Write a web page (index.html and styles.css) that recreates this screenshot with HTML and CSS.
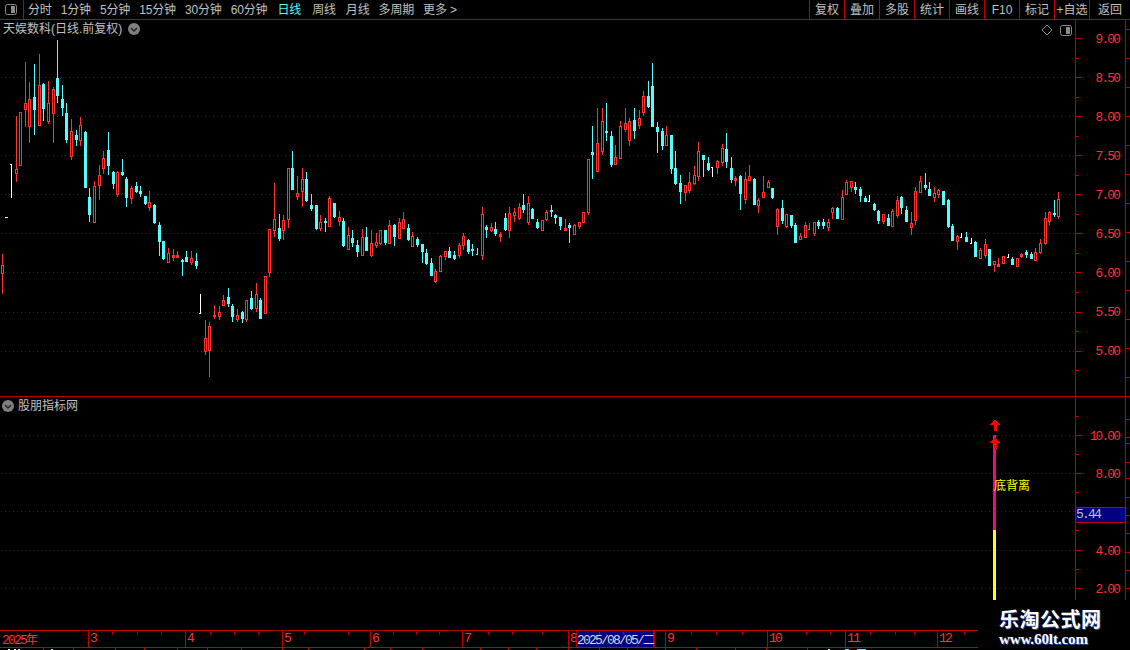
FILE: index.html
```html
<!DOCTYPE html>
<html lang="zh-CN">
<head>
<meta charset="utf-8">
<title>天娱数科 日线</title>
<link rel="stylesheet" href="styles.css">
</head>
<body>
<div class="app">
  <header class="toolbar">
    <div class="layout-cell">
      <svg class="pane-icon" viewBox="0 0 12 11" width="12" height="11"><rect x="0.5" y="0.5" width="11" height="10" rx="2" class="pane-frame"/><rect x="6" y="2" width="4" height="7" class="pane-fill"/></svg>
    </div>
    <nav class="periods">
      <span>分时</span><span>1分钟</span><span>5分钟</span><span>15分钟</span><span>30分钟</span><span>60分钟</span>
      <span class="active">日线</span><span class="shift-2">周线</span><span class="shift-1">月线</span><span>多周期</span><span>更多 &gt;</span>
    </nav>
    <div class="actions">
      <span>复权</span><span>叠加</span><span>多股</span><span>统计</span><span>画线</span><span>F10</span><span>标记</span><span>+自选</span><span class="last">返回</span>
    </div>
  </header>

  <section class="panel panel-main">
    <div class="plot">
      <svg class="canvas" id="candles" viewBox="0 20 1075 376" preserveAspectRatio="none"></svg>
      <div class="legend legend-main">
        <span>天娱数科(日线.前复权)</span>
        <svg class="chevron" viewBox="0 0 12 12" width="12" height="12"><circle cx="6" cy="6" r="6" class="chevron-disc"/><path d="M3 5 L6 8 L9 5" class="chevron-mark"/></svg>
      </div>
      <div class="pane-tools">
        <svg viewBox="0 0 12 12" width="12" height="12"><path d="M6 1 L11 6 L6 11 L1 6 Z" class="diamond"/></svg>
        <svg viewBox="0 0 12 11" width="12" height="11"><rect x="0.5" y="0.5" width="11" height="10" rx="2" class="pane-frame"/><rect x="6" y="2" width="4" height="7" class="pane-fill"/></svg>
      </div>
    </div>
    <div class="axis">
      <svg class="canvas" id="axis-main" viewBox="0 20 50 376" preserveAspectRatio="none">
        <text x="44" y="43">9.00</text><text x="44" y="82">8.50</text><text x="44" y="121">8.00</text>
        <text x="44" y="160">7.50</text><text x="44" y="199">7.00</text><text x="44" y="238">6.50</text>
        <text x="44" y="277">6.00</text><text x="44" y="316">5.50</text><text x="44" y="355">5.00</text>
      </svg>
    </div>
    <div class="rail"><svg class="canvas" id="rail-main" viewBox="0 20 4 376" preserveAspectRatio="none"></svg></div>
  </section>

  <section class="panel panel-sub">
    <div class="plot">
      <svg class="canvas" id="indicator" viewBox="0 397 1075 233" preserveAspectRatio="none">
        <rect x="993" y="435" width="3" height="95" class="bar-pink"/>
        <rect x="993" y="530" width="3" height="70" class="bar-yellow"/>
        <path d="M995 419 L1000.500 425 L996.500 425 L996.500 431 L993.500 431 L993.500 425 L989.500 425 Z" class="arrow"/>
        <path d="M995 437 L1000.500 443 L996.500 443 L996.500 449 L993.500 449 L993.500 443 L989.500 443 Z" class="arrow"/>
      </svg>
      <div class="legend legend-sub">
        <svg class="chevron" viewBox="0 0 12 12" width="12" height="12"><circle cx="6" cy="6" r="6" class="chevron-disc"/><path d="M3 5 L6 8 L9 5" class="chevron-mark"/></svg>
        <span>股朋指标网</span>
      </div>
      <span class="signal">底背离</span>
    </div>
    <div class="axis">
      <svg class="canvas" id="axis-sub" viewBox="0 397 50 233" preserveAspectRatio="none">
        <text x="44" y="440">10.00</text><text x="44" y="478">8.00</text>
        <text x="44" y="555">4.00</text><text x="44" y="593">2.00</text>
      </svg>
      <div class="price-tag">5.44</div>
    </div>
    <div class="rail"><svg class="canvas" id="rail-sub" viewBox="0 397 4 233" preserveAspectRatio="none"></svg></div>
  </section>

  <footer class="dates">
    <span>2025<b class="cjk">年</b></span><span>3</span><span>4</span><span>5</span><span>6</span><span>7</span><span>8</span>
    <span class="date-current">2025/08/05/<b class="cjk">二</b></span><span></span>
    <span>9</span><span>10</span><span>11</span><span>12</span>
    <svg class="canvas" id="date-ticks" viewBox="0 630 1130 20" preserveAspectRatio="none"></svg>
  </footer>

  <aside class="watermark">
    <div class="wm-title">乐淘公式网</div>
    <div class="wm-url">www.60lt.com</div>
  </aside>
</div>
<script src="app.js"></script>
</body>
</html>
```

FILE: styles.css
```css
* { box-sizing: border-box; }
html, body { margin: 0; padding: 0; background: #000; }
body { width: 1130px; height: 650px; overflow: hidden; font: 12px/1 "Liberation Sans", "Noto Sans CJK SC", sans-serif; color: #c0c0c0; }
.app { position: relative; width: 1130px; height: 650px; display: flex; flex-direction: column; background: #000; }

.toolbar { height: 20px; display: flex; border-bottom: 1px solid #c00000; line-height: 21px; flex: none; }
.layout-cell { width: 24px; border-right: 1px solid #c00000; display: flex; align-items: center; justify-content: center; padding-right: 1px; }
.pane-frame { fill: none; stroke: #8c8c8c; }
.pane-fill { fill: #8c8c8c; }
.periods { display: flex; gap: 9px; padding-left: 4px; white-space: nowrap; letter-spacing: -0.150px; }
.periods .active { color: #54fcfc; margin-left: 1px; }
.periods .shift-2 { margin-left: 2px; }
.periods .shift-1 { margin-left: 1px; }
.actions { margin-left: auto; display: flex; }
.actions span { width: 35px; text-align: center; border-left: 1px solid #c00000; white-space: nowrap; }
.actions .last { width: 41px; }

.panel { display: flex; position: relative; flex: none; border-bottom: 1px solid #c00000; }
.panel-main { height: 377px; }
.panel-sub { height: 233px; border-bottom: 0; }
.plot { width: 1075px; flex: none; position: relative; }
.axis { width: 51px; flex: none; position: relative; border-left: 1px solid #c00000; border-right: 1px solid #c00000; }
.rail { width: 4px; flex: none; position: relative; }
.canvas { position: absolute; left: 0; top: 0; width: 100%; height: 100%; display: block; shape-rendering: crispEdges; }
.axis text { font: 13px "Liberation Mono", monospace; letter-spacing: -1.8px; fill: #ff3232; text-anchor: end; shape-rendering: auto; }

.legend { position: absolute; display: flex; align-items: center; line-height: 16px; }
.legend-main { left: 3px; top: 1px; gap: 6px; }
.legend-sub { left: 2px; top: 1px; gap: 4px; }
.chevron-disc { fill: #808080; }
.chevron-mark { fill: none; stroke: #222; stroke-width: 1.500; }
.chevron { shape-rendering: auto; }
.pane-tools { position: absolute; right: 3px; top: 4px; display: flex; gap: 7px; align-items: center; }
.diamond { fill: none; stroke: #8c8c8c; }

.signal { position: absolute; left: 994px; top: 82px; color: #ffff00; line-height: 14px; }
.bar-pink { fill: #ff0080; }
.bar-yellow { fill: #ffff00; }
.arrow { fill: #ff0000; }
.price-tag { position: absolute; left: 0; right: 0; top: 110px; height: 16px; background: #000080; border-top: 1px solid #c00000; border-bottom: 1px solid #c00000; color: #c0c0c0; font: 13px/14px "Liberation Mono", monospace; letter-spacing: -1.8px; padding-left: 0; }

.dates { position: relative; height: 20px; flex: none; display: grid; grid-template-columns: 88px 97px 97px 88px 92px 106px 8px 78px 11px 102px 78px 92px 41px; grid-template-rows: 17px; color: #ff3232; border-top: 1px solid #c00000; font: 13px/16px "Liberation Mono", monospace; letter-spacing: -1.8px; }
.dates > span { border-left: 1px solid #c00000; border-bottom: 1px solid #c00000; padding-left: 1px; white-space: nowrap; }
.dates > span:first-child { border-left: 0; padding-left: 2px; }
.dates .date-current { background: #000080; color: #d8d8d8; padding-left: 0; border-right: 1px solid #c00000; }
.cjk { font: 400 12px/16px "Noto Sans CJK SC", sans-serif; letter-spacing: 0; }

.watermark { position: absolute; right: 0; bottom: 0; width: 152px; height: 50px; background: #000; text-align: left; padding: 9px 0 0 21px; color: #fff; }
.wm-title { font: 700 20px/20px "Noto Sans CJK SC", sans-serif; letter-spacing: 0.500px; text-shadow: 1px 1px 0 #2a4a9a; white-space: nowrap; }
.wm-url { font: 700 15px/15px "Liberation Serif", serif; letter-spacing: -0.100px; text-shadow: 1px 1px 0 #2a4a9a; margin-top: 3px; white-space: nowrap; }

.grid-line { fill: none; stroke: #8c0000; stroke-dasharray: 1 3; }
.tick { fill: none; stroke: #c00000; }
.up { fill: #000; stroke: #ff3232; }
.up-solid { fill: #ff3232; stroke: #ff3232; }
.down { fill: #54fcfc; stroke: #54fcfc; }
.flat { fill: none; stroke: #fff; }
.tick-white { fill: none; stroke: #fff; }
.tick-cyan { fill: none; stroke: #54fcfc; }
```

FILE: app.js
```js
// Each candle: type, x, high, open/close top, open/close bottom, low, read at 3x from the chart.
var SEGMENTS = [
  { ox: 0, oy: 40, rows: [
    ['w',33,372,372,372,473,'t'],['r',49,228,388,399,426],['r',61,217,217,374,374],['r',76,66,190,206,261],['r',88,126,178,257,309],
    ['c',103,72,172,207,285],['r',118,42,136,254,254],['c',130,129,132,204,243],['r',145,123,190,242,252],['r',160,142,148,218,309],
    ['c',172,0,114,165,189],['c',187,136,178,201,228],['c',199,189,220,297,309],['r',214,237,274,349,360],['c',229,270,285,297,318],
    ['r',241,232,256,299,318],['c',256,273,276,441,441],['c',268,445,471,522,546],['r',283,423,439,545,545],['r',298,375,406,434,480],
    ['r',310,333,355,383,402],['c',325,276,330,375,405],['c',340,393,396,429,447],['r',352,393,397,461,471],['c',367,357,396,402,408],
    ['c',379,411,417,471,501],['r',394,438,444,473,492],['c',409,426,438,453,459],['c',421,438,453,459,471],['c',436,468,468,489,495],
    ['r',448,453,487,500,513]
  ]},
  { ox: 0, oy: 200, rows: [
    ['r',7,162,196,218,282],['c',463,12,15,66,72],['c',478,66,75,123,168],['c',490,123,123,174,180],['r',505,144,160,186,186],
    ['f',520,147,165,171,183],['f',532,153,165,171,174],['c',547,177,180,183,228],['c',559,153,171,183,186],['r',574,153,175,186,195],
    ['c',589,159,183,195,207],['w',601,282,340,340,342,'b'],['r',616,360,415,453,465],['r',628,366,378,450,531],['f',643,315,346,348,357],
    ['r',658,318,336,348,360],['r',670,285,301,315,315],['c',685,264,291,309,321],['c',697,312,318,348,366],['r',712,327,345,357,366],
    ['c',727,333,336,354,369],['r',739,300,300,357,366],['c',754,273,294,324,330],['r',769,249,282,324,336],['c',781,294,300,354,357],
    ['r',796,228,228,339,339],['r',808,87,87,216,231],['r',823,-51,57,90,111],['c',838,42,84,114,123],['r',850,45,60,90,120],
    ['r',865,-96,-96,56,84]
  ]},
  { ox: 290, oy: 140, rows: [
    ['c',7,33,84,148,150],['r',22,108,160,168,180],['r',37,84,117,153,201],['c',49,96,117,180,186],['c',64,162,195,204,213],
    ['c',79,195,195,264,270],['r',91,225,247,264,273],['c',106,234,243,246,276],['r',118,168,174,258,258],['c',133,189,189,228,234],
    ['r',148,213,232,243,258],['c',160,234,243,315,321],['r',175,261,286,327,330],['c',187,270,294,306,321],['c',202,300,315,333,351],
    ['r',217,267,291,345,345],['c',229,261,291,330,330],['r',244,270,309,345,351],['r',259,279,306,315,324],['r',271,270,270,309,315],
    ['c',286,270,270,306,315],['r',298,240,255,309,309],['c',313,252,255,288,318],['r',328,234,246,294,297],['r',340,216,237,264,267],
    ['c',355,252,264,297,303],['r',367,276,288,318,321],['c',382,291,297,312,321],['c',397,312,312,333,369],['c',409,327,339,369,375],
    ['c',424,354,369,405,408],['r',436,387,394,423,429],['r',451,345,348,393,396],['r',466,333,334,348,360],['c',478,321,333,351,354],
    ['c',493,333,345,354,360],['r',508,309,315,345,354],['r',520,279,288,315,330],['c',535,297,300,333,342],['c',547,312,327,330,348],
    ['k',562,324,345,345,345,'b'],['r',577,201,222,345,360],['c',589,255,261,267,294],['r',604,249,261,270,276],['c',616,246,267,279,288],
    ['f',631,276,282,288,306],['c',646,219,234,267,273],['r',658,201,219,270,294],['r',673,204,216,225,246],['r',688,189,201,234,240],
    ['c',700,162,195,207,219],['r',715,168,189,246,255],['c',727,204,207,234,237],['c',742,237,246,261,267],['r',757,240,240,270,270],
    ['r',769,210,216,237,243],['c',784,195,210,213,231],['c',796,222,225,231,252],['c',811,231,231,255,270],['f',826,237,264,270,270],
    ['c',838,249,255,261,309],['r',853,252,255,282,285],['r',868,246,246,258,267],['r',880,216,216,246,249]
  ]},
  { ox: 580, oy: 50, rows: [
    ['r',25,327,327,486,495],['c',37,228,306,312,387],['r',52,174,279,362,362],['r',67,174,213,303,315],['c',79,159,243,246,273],
    ['c',94,243,258,342,351],['r',106,285,321,342,342],['r',121,213,228,324,324],['r',136,174,219,237,246],['r',148,204,213,270,288],
    ['c',163,174,210,240,267],['r',178,180,204,225,237],['r',190,123,138,186,198],['c',205,93,138,168,174],['c',217,39,108,228,231],
    ['c',232,216,231,243,309],['c',247,234,243,285,300],['r',259,228,255,285,285],['c',274,255,255,354,372],['c',286,303,354,399,405],
    ['c',301,375,399,423,462],['r',316,405,405,426,453],['r',328,366,396,420,429],['r',343,348,375,399,405],['r',355,276,303,378,393],
    ['c',370,315,315,327,381],['c',385,321,339,357,363],['w',397,351,351,351,381,'t'],['r',412,330,333,351,372],['r',427,282,294,336,348],
    ['c',439,249,297,333,354],['c',454,321,354,387,399],['f',466,378,384,390,408],['c',481,375,378,429,480],['r',496,366,387,447,462],
    ['r',508,345,378,390,393],['c',523,384,387,462,462],['r',535,444,450,465,489],['r',550,378,427,441,441],['r',565,390,396,411,414],
    ['c',577,414,414,441,447],['r',592,474,477,528,555],['c',607,450,474,510,522],['r',619,492,492,528,534],['c',634,495,495,525,534],
    ['c',646,519,525,576,579],['r',661,549,558,567,567],['r',676,516,525,561,561],['l',688,519,540,540,540,'b'],['r',703,516,516,549,558],
    ['c',715,510,516,525,537],['c',730,507,516,525,537]
  ]},
  { ox: 820, oy: 160, rows: [
    ['r',25,177,186,201,213],['r',37,141,144,156,177],['c',52,141,144,174,177],['r',67,90,111,177,177],['r',79,60,66,102,102],
    ['r',94,63,64,81,96],['c',106,66,81,87,102],['c',121,81,87,105,126],['c',136,108,114,123,126],['w',148,105,124,124,126,'b'],
    ['c',163,129,132,147,153],['c',175,150,153,180,192],['r',190,163,163,183,192],['c',205,162,174,195,195],['r',217,147,153,198,201],
    ['r',232,108,120,165,174],['c',244,108,111,141,162],['c',259,138,150,183,186],['r',274,156,190,201,225],['r',286,81,93,180,195],
    ['r',301,48,63,96,99],['c',316,39,75,81,90],['c',328,66,87,105,105],['r',343,81,99,111,126],['r',355,87,90,102,114],
    ['c',370,93,93,132,135],['c',385,117,120,198,204],['c',397,192,198,240,240],['r',412,225,228,243,270],['w',424,219,232,232,234,'b'],
    ['c',439,216,231,243,246],['w',454,234,237,237,252,'b'],['c',466,243,246,288,291],['r',481,264,270,294,294],['r',496,237,252,285,294],
    ['c',508,267,267,315,315],['r',523,304,304,312,336],['f',535,294,312,318,318],['r',550,288,288,309,312],['w',565,282,292,292,294,'b'],
    ['c',577,291,297,312,315],['r',592,294,294,318,318],['f',604,279,282,288,294],['c',619,270,276,282,294],['c',634,276,282,294,297],
    ['r',646,264,276,300,300],['r',661,237,249,276,282],['r',676,156,174,249,255],['r',688,153,156,183,195],['c',703,120,159,162,171],
    ['r',715,96,117,168,177]
  ]}
];

var NS = 'http://www.w3.org/2000/svg';
function addPath(svg, d, cls) {
  var p = document.createElementNS(NS, 'path');
  p.setAttribute('d', d);
  p.setAttribute('class', cls);
  svg.appendChild(p);
}
function hline(y, x0, x1) { return 'M' + x0 + ' ' + (y + 0.5) + 'H' + x1; }
function vline(x, y0, y1) { return 'M' + (x + 0.5) + ' ' + y0 + 'V' + y1; }

function drawCandles(svg) {
  var red = '', solid = '', cyan = '', white = '', thinCyan = '', thinRed = '';
  SEGMENTS.forEach(function (seg) {
    seg.rows.forEach(function (r) {
      var x = Math.floor(seg.ox + r[1] / 3);
      var hi = Math.round(seg.oy + r[2] / 3), top = Math.round(seg.oy + r[3] / 3);
      var bot = Math.round(seg.oy + r[4] / 3), lo = Math.round(seg.oy + r[5] / 3);
      if (r[0] === 'w' || r[0] === 'k' || r[0] === 'l') {
        var tickY = r[6] === 't' ? hi : lo - 1;
        var d = vline(x, hi, lo) + hline(tickY, x - 1, x + 1);
        if (r[0] === 'w') white += d; else if (r[0] === 'k') thinCyan += d; else thinRed += d;
        return;
      }
      var body = 'M' + (x - 0.5) + ' ' + (top + 0.5) + 'H' + (x + 1.5) + 'V' + (bot + 0.5) + 'H' + (x - 0.5) + 'Z';
      var wick = (hi < top ? vline(x, hi, top) : '') + (lo > bot ? vline(x, bot, lo) : '');
      if (r[0] === 'r') red += wick + body;
      else if (r[0] === 'f') solid += wick + body;
      else cyan += wick + body;
    });
  });
  addPath(svg, red, 'up');
  addPath(svg, solid, 'up-solid');
  addPath(svg, cyan, 'down');
  addPath(svg, white, 'flat');
  addPath(svg, thinCyan, 'tick-cyan');
  addPath(svg, thinRed, 'up');
  var dot = 'M5 217.5H8';
  addPath(svg, dot, 'flat');
}

function drawGrid(svg, ys, width) {
  var d = '';
  ys.forEach(function (y) { d += hline(y, 1, width); });
  addPath(svg, d, 'grid-line');
}

function drawTicks(svg, major, minor) {
  var d = '';
  major.forEach(function (y) { d += hline(y, 0, 5); });
  minor.forEach(function (y) { d += hline(y, 0, 3); });
  addPath(svg, d, 'tick');
}

var mainYs = [38, 77, 116, 155, 194, 233, 272, 312, 351];
var mainMinor = [58, 97, 136, 175, 214, 253, 292, 331, 370];
var subYs = [435, 473, 511, 550, 588];
var subMinor = [416, 454, 492, 530, 569];

var candles = document.getElementById('candles');
drawGrid(candles, mainYs.slice(1), 1075);
drawCandles(candles);
var indicator = document.getElementById('indicator');
drawGrid(indicator, subYs, 1075);
indicator.appendChild(indicator.children[0]);
indicator.appendChild(indicator.children[0]);
indicator.appendChild(indicator.children[0]);
indicator.appendChild(indicator.children[0]);
drawTicks(document.getElementById('axis-main'), mainYs, mainMinor);
drawTicks(document.getElementById('axis-sub'), subYs, subMinor);

var railMain = [], railSub = [419, 437, 443, 462, 478, 497, 515, 533, 552, 570, 588];
for (var y = 29; y < 396; y += 29) railMain.push(y);
function drawRail(id, ys) {
  var d = '';
  ys.forEach(function (y) { d += hline(y, 0, 4); });
  addPath(document.getElementById(id), d, 'tick');
}
drawRail('rail-main', railMain);
drawRail('rail-sub', railSub);

var topTicks = [112, 137, 161, 210, 234, 258, 304, 348, 393, 416, 439, 488, 512, 542, 599, 623, 691, 716, 742, 806, 830, 870, 895, 914, 964];
var lowTicks = [43, 73, 115, 144, 177, 207, 241, 282, 308, 364, 390, 422, 480, 508, 536, 568, 599, 627, 665, 696, 735, 766, 807];
var dateSvg = document.getElementById('date-ticks');
var dt = '';
topTicks.forEach(function (x) { dt += vline(x, 631, 634); });
lowTicks.forEach(function (x) { dt += vline(x, 647, 650); });
addPath(dateSvg, dt, 'tick');
addPath(dateSvg, 'M8 649.5H10M14 649.5H16M18 649.5H20M51 649.5H53M828 649.5H830', 'tick-white');
addPath(dateSvg, 'M845 649.5H849M857 649.5H866', 'tick-cyan');
```
